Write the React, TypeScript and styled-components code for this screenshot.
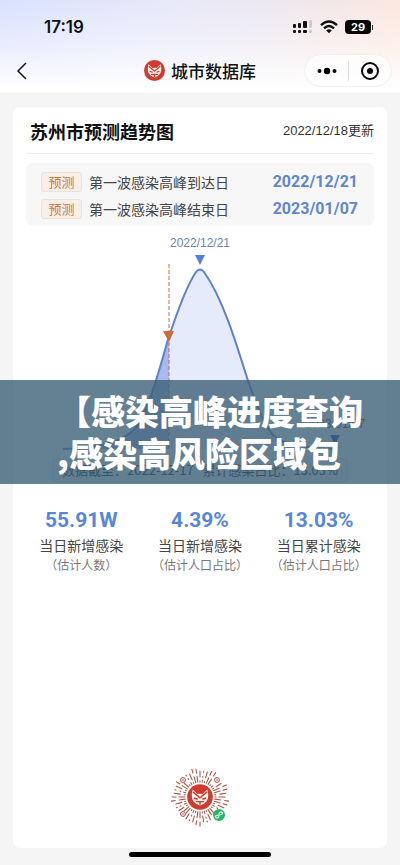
import React from 'react';
import styled, { createGlobalStyle } from 'styled-components';

const GlobalStyle = createGlobalStyle`
  * { box-sizing: border-box; }
  body {
    margin: 0;
    background: #f5f5f5;
    color: #111;
    font-family: "Liberation Sans", "Noto Sans CJK SC", sans-serif;
  }
  button { border: 0; padding: 0; background: none; color: inherit; cursor: pointer; }
  h1, h2, p, dl, dt, dd { margin: 0; }
`;

const Page = styled.div`
  position: relative;
  display: flex;
  flex-direction: column;
  min-height: 100vh;
`;

const Header = styled.header`
  height: 93px;
  background:
    linear-gradient(180deg, rgba(255, 255, 255, 0) 0%, rgba(255, 255, 255, 0.4) 50%, #fff 95%),
    linear-gradient(100deg, #d8e1ff 0%, #e6e8fa 35%, #ece8f0 65%, #fde7dc 100%);
`;

const StatusBar = styled.div`
  display: flex;
  align-items: center;
  justify-content: space-between;
  height: 52px;
  padding: 2px 27px 0 44px;
`;

const Clock = styled.time`
  font: 600 17px/20px Inter, sans-serif;
`;

const StatusIcons = styled.div`
  display: flex;
  align-items: center;
  gap: 7px;
`;

const Battery = styled.span`
  display: flex;
  align-items: center;
  gap: 1px;

  b {
    width: 26px;
    border-radius: 4px;
    background: #050505;
    color: #fff;
    font: 700 11px/14px Inter, sans-serif;
    text-align: center;
  }

  i {
    width: 1px;
    height: 5px;
    background: #333;
  }
`;

const NavBar = styled.nav`
  display: grid;
  grid-template-columns: 1fr auto 1fr;
  align-items: center;
  height: 37px;
  padding: 0 8px;
`;

const BackButton = styled.button`
  display: flex;
  justify-self: start;
  padding: 0 4px;
`;

const Brand = styled.h1`
  display: flex;
  align-items: center;
  gap: 6px;
  font: 500 17px/24px "Noto Sans CJK SC", sans-serif;
`;

const Capsule = styled.div`
  display: flex;
  align-items: center;
  justify-self: end;
  height: 33px;
  border: 1px solid #f4efef;
  border-radius: 17px;
  background: rgba(255, 255, 255, 0.65);
`;

const CapsuleButton = styled.button`
  display: flex;
  justify-content: center;
  width: 43px;

  & + & { border-left: 1px solid #e3e0e0; }
`;

const Card = styled.main`
  display: flex;
  flex: 1;
  flex-direction: column;
  margin: 14px 13px 0;
  border-radius: 7px;
  background: #fff;
`;

const CardHeader = styled.div`
  display: flex;
  align-items: center;
  justify-content: space-between;
  height: 47px;
  margin: 0 13px;
  padding: 2px 0 0 4px;
  border-bottom: 1px solid #ececec;
`;

const CardTitle = styled.h2`
  font: 700 18px/26px "Noto Sans CJK SC", sans-serif;
`;

const Updated = styled.span`
  color: #333;
  font-size: 13px;
  line-height: 20px;
`;

const Forecasts = styled.dl`
  margin: 9px 13px 0;
  padding: 5px 16px 4px 15px;
  border-radius: 7px;
  background: #f7f7f7;
`;

const ForecastRow = styled.div`
  display: flex;
  align-items: center;
  justify-content: space-between;
  height: 27px;
`;

const ForecastName = styled.dt`
  display: flex;
  align-items: center;
  gap: 7px;
  color: #444;
  font: 400 14px/18px "Noto Sans CJK SC", sans-serif;
`;

const Tag = styled.span`
  width: 41px;
  border: 1px solid #ece0d8;
  border-radius: 3px;
  background: #f8efe9;
  color: #c9793f;
  font-size: 13px;
  line-height: 18px;
  text-align: center;
`;

const ForecastDate = styled.dd`
  color: #5f86cf;
  font: 700 16px/20px Roboto, sans-serif;
`;

const Chart = styled.svg`
  display: block;
  width: 100%;
  height: auto;
`;

const Caption = styled.p`
  align-self: center;
  padding: 0 9px;
  border: 1px solid #e6e6e6;
  border-radius: 3px;
  background: #f4f4f4;
  color: #222;
  font: 400 13px/22px "Noto Sans CJK SC", sans-serif;
  white-space: nowrap;
`;

const Stats = styled.dl`
  display: grid;
  grid-template-columns: repeat(3, 1fr);
  padding: 26px 9px 0;
`;

const Stat = styled.div`
  display: flex;
  flex-direction: column-reverse;
  align-items: center;
`;

const StatName = styled.dt`
  color: #444;
  font: 400 14px/22px "Noto Sans CJK SC", sans-serif;
  text-align: center;
  white-space: nowrap;

  small {
    display: block;
    color: #777;
    font-size: 12px;
    line-height: 18px;
    font-feature-settings: "halt";
  }
`;

const StatValue = styled.dd`
  margin-bottom: 2px;
  color: #5886da;
  font: 700 21px/24px Roboto, sans-serif;
`;

const CodeHolder = styled.div`
  display: flex;
  justify-content: center;
  margin-top: auto;
  padding: 20px 0 21px;
`;

const HomeIndicator = styled.div`
  width: 142px;
  height: 5px;
  margin: 4px auto 8px;
  border-radius: 3px;
  background: #000;
`;

const Banner = styled.div`
  position: absolute;
  top: 380px;
  right: 0;
  left: 0;
  display: flex;
  justify-content: center;
  padding: 10px 0 10px 20px;
  background: rgba(61, 96, 120, 0.8);
`;

const BannerText = styled.p`
  color: #fff;
  font: 900 34px/42px "Noto Sans CJK SC", sans-serif;
  white-space: nowrap;

  span { display: block; }
`;

const FoxFace = () => (
  <>
    <circle r="10.5" fill="#cf3b2f" />
    <path
      d="M-6-6.2L-2.1-2.5Q0-3 2.1-2.5L6-6.2Q7.5-.8 6 2.5Q4.5 5.4 0 7Q-4.5 5.4-6 2.5Q-7.5-.8-6-6.2Z"
      fill="#fff1ed"
    />
    <path
      d="M-5.8-4.2L0 .6L5.8-4.2M-5 .8L-1.9 1.8M5 .8L1.9 1.8M-3.4 3.8H3.4M0 3.8V6.4"
      fill="none"
      stroke="#cf3b2f"
      strokeWidth="1.2"
    />
  </>
);

const finderSpots = [[-17, -17], [17, -17], [-17, 17]];

const isCovered = (x: number, y: number) =>
  finderSpots.some(([fx, fy]) => Math.hypot(x - fx, y - fy) < 4) ||
  Math.hypot(x - 19, y - 18) < 7;

const rays = Array.from({ length: 44 }, (_, i) => {
  const angle = (i / 44) * Math.PI * 2;
  const dashes: { x1: number; y1: number; x2: number; y2: number }[] = [];
  let r = 15;
  let step = 0;
  while (r < 29) {
    const length = [1, 4, 1, 6, 2][(i * 7 + step * 3 + ((i * i) % 5)) % 5];
    const end = Math.min(r + length, 29);
    const mid = (r + end) / 2;
    const cos = Math.cos(angle);
    const sin = Math.sin(angle);
    if (!isCovered(mid * cos, mid * sin)) {
      dashes.push({ x1: r * cos, y1: r * sin, x2: end * cos, y2: end * sin });
    }
    r = end + 3 + ((i + step) % 2);
    step += 1;
  }
  return dashes;
}).flat();

const MiniProgramCode = () => (
  <svg width="60" height="60" viewBox="-30 -30 60 60" role="img" aria-label="小程序码">
    <g stroke="#ad5446" strokeWidth="1.1" strokeLinecap="round">
      {rays.map((ray, i) => (
        <line key={i} {...ray} />
      ))}
    </g>
    {finderSpots.map(([x, y]) => (
      <g key={`${x},${y}`} transform={`translate(${x} ${y})`}>
        <circle r="2.4" fill="#fff" stroke="#a8483a" />
        <circle r="0.8" fill="#a8483a" />
      </g>
    ))}
    <g transform="scale(1.22)"><FoxFace /></g>
    <circle cx="19" cy="18" r="6" fill="#24b76a" />
    <path
      d="M17.5 18.2Q15.3 18.4 15.6 20Q16.2 21.6 18 20.8Q19 20.2 19 18.8V17.2Q19 15.7 20.2 15.2Q22 14.8 22.4 16.2Q22.4 17.6 20.5 17.8"
      fill="none"
      stroke="#fff"
      strokeWidth="1.1"
      strokeLinecap="round"
    />
  </svg>
);

const curve =
  'M50 223C94 221 116 214 126 197C138 175 145 148 154 117C164 86 174 59 183 46Q187 41 191 46C209 71 222 113 236 158C246 184 251 198 260 209C270 219 291 222 322 223';

const TrendChart = () => (
  <Chart viewBox="0 0 374 232" role="img" aria-label="感染趋势">
    <defs>
      <clipPath id="elapsed"><rect width="156" height="232" /></clipPath>
    </defs>
    <path d={`${curve}Z`} fill="#e5ebfb" />
    <path d={`${curve}Z`} fill="#aab8f1" clipPath="url(#elapsed)" />
    <path d={curve} fill="none" stroke="#5b82cc" strokeWidth="2" />
    <path d="M156 38V223" stroke="#b9714b" strokeDasharray="4 2" />
    <path d="M150 105H161L156 116Z" fill="#cb6b38" />
    <path d="M182 29H192L187 39Z" fill="#527fdc" />
    <path d="M317 209H327L322 219Z" fill="#1f4fb8" />
    <g fill="#6885b4" fontFamily="Liberation Sans, sans-serif" fontSize="12" textAnchor="middle">
      <text x="187" y="21">2022/12/21</text>
      <text x="322" y="202" fill="#2c4f86">2023/01/07</text>
    </g>
  </Chart>
);

const forecasts = [
  { name: '第一波感染高峰到达日', date: '2022/12/21' },
  { name: '第一波感染高峰结束日', date: '2023/01/07' },
];

const stats = [
  { value: '55.91W', name: '当日新增感染', note: '（估计人数）' },
  { value: '4.39%', name: '当日新增感染', note: '（估计人口占比）' },
  { value: '13.03%', name: '当日累计感染', note: '（估计人口占比）' },
];

export default function App() {
  return (
    <Page>
      <GlobalStyle />
      <Header>
        <StatusBar>
          <Clock>17:19</Clock>
          <StatusIcons>
            <svg width="21" height="14" viewBox="0 0 21 14" aria-hidden="true">
              <g fill="#111">
                <rect x="1" y="4" width="3" height="4" rx="1" />
                <rect x="6" y="3" width="3" height="5" rx="1" />
                <rect x="11" y="1" width="4" height="7" rx="1" />
                <rect x="1" y="10" width="3" height="3" rx="1" />
                <rect x="6" y="10" width="3" height="3" rx="1" />
                <rect x="11" y="10" width="4" height="3" rx="1" />
              </g>
              <g fill="#cfc9ca">
                <rect x="17" y="0" width="3" height="8" rx="1" />
                <rect x="17" y="10" width="3" height="3" rx="1" />
              </g>
            </svg>
            <svg width="18" height="14" viewBox="0 0 18 14" aria-hidden="true">
              <g fill="none" stroke="#111" strokeWidth="2.4">
                <path d="M1 5.2Q9-2.4 17 5.2" />
                <path d="M4 8.4Q9 3.6 14 8.4" />
              </g>
              <path d="M6.2 10.4Q9 8 11.8 10.4L9 13.2Z" fill="#111" />
            </svg>
            <Battery><b>29</b><i /></Battery>
          </StatusIcons>
        </StatusBar>
        <NavBar>
          <BackButton aria-label="返回">
            <svg width="20" height="20" viewBox="0 0 20 20" fill="none" stroke="#111" strokeWidth="1.5">
              <path d="M14 2L6 10L14 18" />
            </svg>
          </BackButton>
          <Brand>
            <svg width="21" height="21" viewBox="-10.5 -10.5 21 21" aria-hidden="true"><FoxFace /></svg>
            城市数据库
          </Brand>
          <Capsule>
            <CapsuleButton aria-label="更多">
              <svg width="20" height="20" viewBox="0 0 20 20" fill="#050505">
                <circle cx="2.5" cy="10" r="2" />
                <circle cx="10" cy="10" r="3.2" />
                <circle cx="17.5" cy="10" r="2" />
              </svg>
            </CapsuleButton>
            <CapsuleButton aria-label="关闭">
              <svg width="20" height="20" viewBox="0 0 20 20">
                <circle cx="10" cy="10" r="8" fill="none" stroke="#050505" strokeWidth="2" />
                <circle cx="10" cy="10" r="3" fill="#050505" />
              </svg>
            </CapsuleButton>
          </Capsule>
        </NavBar>
      </Header>

      <Card>
        <CardHeader>
          <CardTitle>苏州市预测趋势图</CardTitle>
          <Updated>2022/12/18更新</Updated>
        </CardHeader>
        <Forecasts>
          {forecasts.map((item) => (
            <ForecastRow key={item.name}>
              <ForecastName><Tag>预测</Tag>{item.name}</ForecastName>
              <ForecastDate>{item.date}</ForecastDate>
            </ForecastRow>
          ))}
        </Forecasts>
        <TrendChart />
        <Caption>数据截至：2022-12-17&nbsp;&nbsp; 累计感染占比：13.03%</Caption>
        <Stats>
          {stats.map((item) => (
            <Stat key={item.value}>
              <StatName>{item.name}<small>{item.note}</small></StatName>
              <StatValue>{item.value}</StatValue>
            </Stat>
          ))}
        </Stats>
        <CodeHolder><MiniProgramCode /></CodeHolder>
      </Card>
      <HomeIndicator />

      <Banner>
        <BannerText>
          <span>【感染高峰进度查询</span>
          <span>,感染高风险区域包</span>
        </BannerText>
      </Banner>
    </Page>
  );
}
